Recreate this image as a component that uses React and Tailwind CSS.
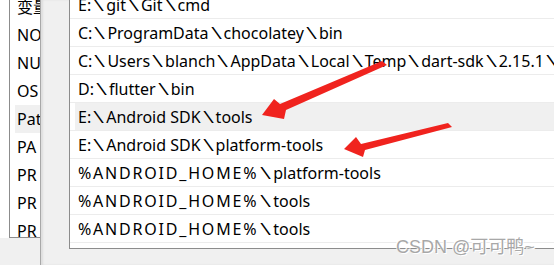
const leftRows = ["变量", "NO", "NU", "OS", "Pat", "PA", "PR", "PR", "PR"];

const pathRows = [
  "E:\\git\\Git\\cmd",
  "C:\\ProgramData\\chocolatey\\bin",
  "C:\\Users\\blanch\\AppData\\Local\\Temp\\dart-sdk\\2.15.1\\dart-sdk\\bin",
  "D:\\flutter\\bin",
  "E:\\Android SDK\\tools",
  "E:\\Android SDK\\platform-tools",
  "%ANDROID_HOME%\\platform-tools",
  "%ANDROID_HOME%\\tools",
  "%ANDROID_HOME%\\tools",
];

// the system font draws "\" as a long, wide slash and its capitals run wide
function PathText({ text }) {
  const parts = text.split("\\");
  return (
    <>
      {parts.map((part, i) => (
        <span key={i}>
          {i > 0 && (
            <span className="inline-block w-[15px] text-center font-light scale-x-[2] scale-y-[1.08]">
              \
            </span>
          )}
          {/^%[A-Z_]+%$/.test(part) ? (
            <span className="tracking-[1.8px]">{part}</span>
          ) : (
            part
          )}
        </span>
      ))}
    </>
  );
}

export default function App() {
  return (
    <div
      className="relative w-[554px] h-[265px] overflow-hidden flex bg-[#f0f0f0] text-[16px] text-black"
      style={{ fontFamily: '"Noto Sans", "Noto Sans CJK SC", sans-serif' }}
    >
      {/* window behind */}
      <div className="w-[40px] shrink-0 flex flex-col">
        <div className="h-[238px] bg-white">
          <div className="ml-[9px] h-full border-l border-b border-[#8c8c8c] overflow-hidden">
            <div className="mt-[-7px]">
              {leftRows.map((r, i) => (
                <div
                  key={i}
                  className={`h-[28px] ml-[5px] pl-[2px] flex items-center whitespace-nowrap ${
                    r === "Pat" ? "bg-[#f0f0f0]" : ""
                  }`}
                >
                  {r}
                </div>
              ))}
            </div>
          </div>
        </div>
      </div>

      {/* edit dialog */}
      <div className="flex-1 border-l border-[#a8a8a8] shadow-[inset_2px_0_2px_rgba(0,0,0,0.08)] pl-[28px]">
        <div className="h-[249px] bg-white border-l border-b border-[#8c8c8c] overflow-hidden">
          <div className="mt-[-9px]">
            {pathRows.map((p, i) => (
              <div key={i} className="h-[28px] border-b border-[#ececec]">
                <div
                  className={`h-full ml-[5px] pl-[3px] flex items-center whitespace-nowrap ${
                    i === 4 ? "bg-[#f0f0f0]" : ""
                  }`}
                >
                  <PathText text={p} />
                </div>
              </div>
            ))}
          </div>
        </div>
      </div>

      {/* red arrows */}
      <svg className="absolute inset-0 pointer-events-none" width="554" height="265">
        <polygon
          points="382,61 387,65 286,110 284,119 262,115 274,99 280,104"
          fill="#f0231e"
        />
        <polygon
          points="448,123 452,127 365,150 363,157 344,149 356,137 361,144"
          fill="#f0231e"
        />
      </svg>

      {/* watermark */}
      <div
        className="absolute left-[396px] top-[234px] text-[18px] text-[#a8a8a8] whitespace-nowrap [text-shadow:1px_1px_0_#ffffff,-1px_-1px_0_#ffffff]"
        style={{ fontFamily: '"Liberation Sans", "Noto Sans CJK SC", sans-serif' }}
      >
        CSDN @可可鸭~
      </div>
    </div>
  );
}
